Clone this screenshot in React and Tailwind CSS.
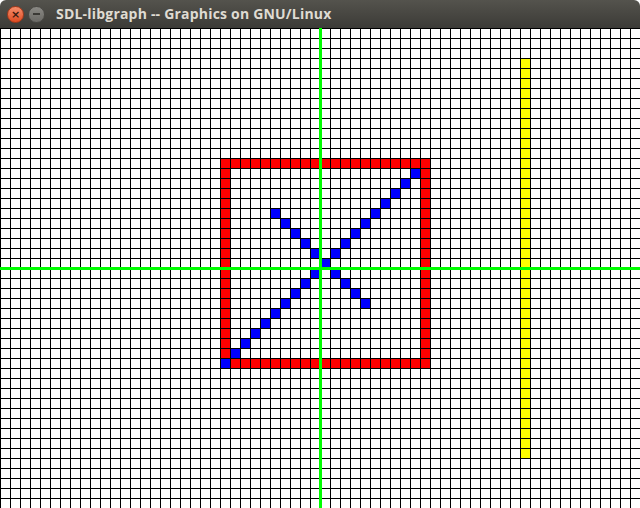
import React from "react";

const COLS = 64;
const ROWS = 48;

function buildCells() {
  const map = {};
  for (let c = 22; c <= 42; c++) {
    map[`${c},13`] = "r";
    map[`${c},33`] = "r";
  }
  for (let r = 13; r <= 33; r++) {
    map[`22,${r}`] = "r";
    map[`42,${r}`] = "r";
  }
  for (let c = 22; c <= 41; c++) map[`${c},${55 - c}`] = "b";
  for (let c = 27; c <= 36; c++) map[`${c},${c - 9}`] = "b";
  for (let r = 3; r <= 42; r++) map[`52,${r}`] = "y";
  return map;
}

const cellMap = buildCells();

const colorClass = {
  r: "bg-[#ff0000]",
  b: "bg-[#0000ff]",
  y: "bg-[#ffff00]",
};

export default function App() {
  const cells = [];
  for (let r = 0; r < ROWS; r++) {
    for (let c = 0; c < COLS; c++) {
      const k = cellMap[`${c},${r}`];
      cells.push(
        <div key={`${c}-${r}`} className={k ? colorClass[k] : "bg-white"} />
      );
    }
  }
  return (
    <div className="w-[640px] h-[508px] bg-white overflow-hidden flex flex-col">
      <div className="h-[28px] shrink-0 rounded-t-[6px] bg-gradient-to-b from-[#54534d] to-[#3c3b37] flex items-center pl-[7px]">
        <div className="w-[17px] h-[17px] rounded-full bg-gradient-to-b from-[#f58d6a] to-[#df4a1e] border border-[#a8391a] flex items-center justify-center">
          <span className="text-[#3a1a10] text-[11px] leading-none font-bold [font-family:'DejaVu_Sans',sans-serif]">×</span>
        </div>
        <div className="ml-[4px] w-[17px] h-[17px] rounded-full bg-gradient-to-b from-[#8a8984] to-[#6a6965] border border-[#4a4945] flex items-center justify-center">
          <div className="w-[7px] h-[2px] bg-[#3a3935]" />
        </div>
        <div className="ml-[11px] text-[#dfdbd2] text-[14px] font-bold tracking-[0.2px] [font-family:'Open_Sans',sans-serif] leading-none">
          SDL-libgraph -- Graphics on GNU/Linux
        </div>
      </div>
      <div className="relative w-[640px] h-[480px] bg-black pl-[1px] pt-[1px]">
        <div className="grid grid-cols-[repeat(64,9px)] grid-rows-[repeat(48,9px)] gap-[1px]">
          {cells}
        </div>
        <div className="absolute left-[319px] top-0 w-[3px] h-[480px] bg-[#00ff00]" />
        <div className="absolute left-0 top-[239px] w-[640px] h-[3px] bg-[#00ff00]" />
      </div>
    </div>
  );
}
